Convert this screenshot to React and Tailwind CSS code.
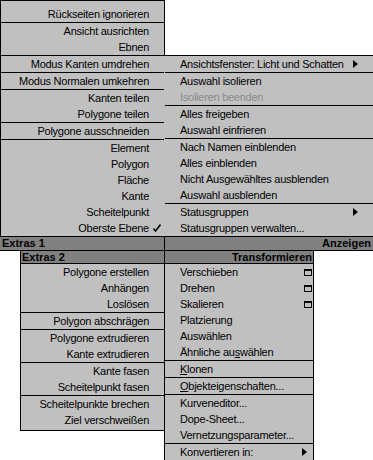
import React from 'react'

const TOP_LEFT_A = [
  ['Rückseiten ignorieren'],
  'sep',
  ['Ansicht ausrichten'],
  ['Ebnen'],
]

const TOP_LEFT_B = [
  ['Modus Kanten umdrehen'],
  'sep',
  ['Modus Normalen umkehren'],
  'sep',
  ['Kanten teilen'],
  ['Polygone teilen'],
  'sep',
  ['Polygone ausschneiden'],
  'sep',
  ['Element'],
  ['Polygon'],
  ['Fläche'],
  ['Kante'],
  ['Scheitelpunkt'],
  ['Oberste Ebene', 'check'],
]

const TOP_RIGHT = [
  ['Ansichtsfenster: Licht und Schatten', 'arrow'],
  'sep',
  ['Auswahl isolieren'],
  ['Isolieren beenden', 'disabled'],
  'sep',
  ['Alles freigeben'],
  ['Auswahl einfrieren'],
  'sep',
  ['Nach Namen einblenden'],
  ['Alles einblenden'],
  ['Nicht Ausgewähltes ausblenden'],
  ['Auswahl ausblenden'],
  'sep',
  ['Statusgruppen', 'arrow'],
  ['Statusgruppen verwalten...'],
]

const BOTTOM_LEFT = [
  ['Polygone erstellen'],
  ['Anhängen'],
  ['Loslösen'],
  'sep',
  ['Polygon abschrägen'],
  'sep',
  ['Polygone extrudieren'],
  ['Kante extrudieren'],
  'sep',
  ['Kante fasen'],
  ['Scheitelpunkt fasen'],
  'sep',
  ['Scheitelpunkte brechen'],
  ['Ziel verschweißen'],
]

const BOTTOM_RIGHT = [
  ['Verschieben', 'box'],
  ['Drehen', 'box'],
  ['Skalieren', 'box'],
  ['Platzierung'],
  ['Auswählen'],
  [<>Ähnliche au<u>s</u>wählen</>],
  'sep',
  [<><u>K</u>lonen</>],
  'sep',
  [<><u>O</u>bjekteigenschaften...</>],
  'sep',
  ['Kurveneditor...'],
  ['Dope-Sheet...'],
  ['Vernetzungsparameter...'],
  'sep',
  ['Konvertieren in:', 'arrow'],
]

function Arrow() {
  return (
    <svg width="5" height="8" viewBox="0 0 5 8" className="shrink-0">
      <polygon points="0,0 5,4 0,8" fill="black" />
    </svg>
  )
}

function Check() {
  return (
    <svg width="8" height="8" viewBox="0 0 8 8">
      <polyline points="0.5,4.5 2.5,7 7.5,0.5" fill="none" stroke="black" strokeWidth="1.6" />
    </svg>
  )
}

function WinBox() {
  return <span className="block w-[8px] h-[7px] border border-black border-t-2 mt-px" />
}

function LeftList({ items }) {
  return items.map((it, i) => {
    if (it === 'sep') return <div key={i} className="h-px bg-black" />
    const [label, extra] = it
    return (
      <div key={i} className="flex justify-end items-center h-[16px] leading-[16px] whitespace-nowrap">
        <span>{label}</span>
        <span className="w-[15px] flex justify-center">{extra === 'check' && <Check />}</span>
      </div>
    )
  })
}

function RightList({ items, arrowPad = 'pr-[15px]' }) {
  return items.map((it, i) => {
    if (it === 'sep') return <div key={i} className="h-px bg-black" />
    const [label, extra] = it
    return (
      <div
        key={i}
        className={`flex justify-between items-center h-[16px] leading-[16px] pl-[15px] whitespace-nowrap ${extra === 'box' ? 'pr-[1px]' : arrowPad} ${extra === 'disabled' ? 'text-[#8a8a8a]' : ''}`}
      >
        <span>{label}</span>
        {extra === 'arrow' && <Arrow />}
        {extra === 'box' && <WinBox />}
      </div>
    )
  })
}

export default function App() {
  return (
    <div className="w-[373px] h-[460px] bg-white overflow-hidden text-[11px] tracking-[-0.25px] text-black font-['Liberation_Sans',Arial,sans-serif]">
      {/* upper quads */}
      <div className="flex items-start">
        <div className="w-[165px] shrink-0 border-l border-t border-r border-black bg-[#c0c0c0] pt-[5px]">
          <LeftList items={TOP_LEFT_A} />
          <div className="h-px bg-black" />
          <LeftList items={TOP_LEFT_B} />
        </div>
        <div className="flex-1 mt-[55px] border-t border-black bg-[#c0c0c0] -ml-px pl-px">
          <RightList items={TOP_RIGHT} arrowPad="pr-[15px]" />
        </div>
      </div>

      {/* Extras 1 bar */}
      <div className="flex h-[15px] border-t border-b border-black bg-[#808080] font-bold leading-[13px] tracking-normal">
        <div className="w-[164px] pl-[2px]">Extras 1</div>
        <div className="flex-1 border-l border-black text-right pr-[2px]">Anzeigen</div>
      </div>

      {/* Extras 2 bar */}
      <div className="ml-[20px] w-[294px] flex h-[13px] border-l border-r border-b border-black bg-[#808080] font-bold leading-[12px] tracking-normal">
        <div className="w-[143px] pl-px">Extras 2</div>
        <div className="flex-1 border-l border-black text-right pr-px">Transformieren</div>
      </div>

      {/* lower quads */}
      <div className="ml-[20px] w-[294px] flex items-start">
        <div className="w-[144px] shrink-0 border-l border-b border-black bg-[#c0c0c0] pb-[2px]">
          <LeftList items={BOTTOM_LEFT} />
        </div>
        <div className="flex-1 border-l border-r border-black bg-[#c0c0c0]">
          <RightList items={BOTTOM_RIGHT} arrowPad="pr-[6px]" />
        </div>
      </div>
    </div>
  )
}
